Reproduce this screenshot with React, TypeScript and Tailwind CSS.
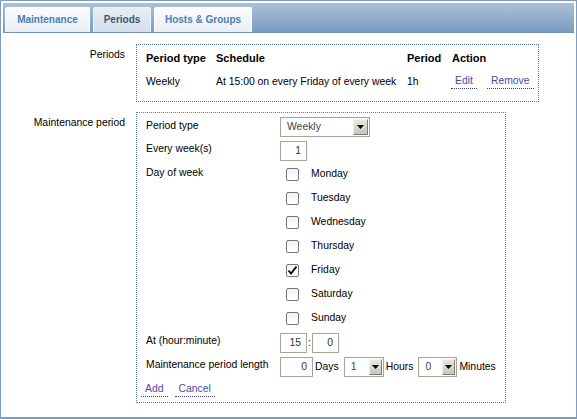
import type { ReactNode } from "react";

const days = ["Monday", "Tuesday", "Wednesday", "Thursday", "Friday", "Saturday", "Sunday"];

function Tab({ label, active, className }: { label: string; active?: boolean; className: string }) {
  return (
    <div
      className={`flex h-[25px] items-center justify-center rounded-t-[2px] border border-b-0 text-[10px] font-bold ${className} ${
        active
          ? "border-[#eef3f8] bg-gradient-to-b from-[#e6edf4] to-[#d3dfeb] text-[#3c5878]"
          : "border-[#ffffff] bg-gradient-to-b from-[#fbfcfd] to-[#e9eff5] text-[#4d7db5]"
      }`}
    >
      {label}
    </div>
  );
}

function DropBtn({ className }: { className: string }) {
  return (
    <div
      className={`my-[1px] mr-[1px] flex items-center justify-center border-t border-l border-t-[#f4f3ee] border-l-[#f4f3ee] border-r border-b border-r-[#7a7a7a] border-b-[#7a7a7a] bg-gradient-to-b from-[#e9e7e1] to-[#c9c5bc] ${className}`}
    >
      <svg width="7" height="4" viewBox="0 0 7 4">
        <path d="M0 0H7L3.5 4Z" fill="#000" />
      </svg>
    </div>
  );
}

function Select({ value, className, btn }: { value: string; className: string; btn: string }) {
  return (
    <div className={`flex h-[20px] items-stretch border border-[#a8a496] bg-white ${className}`}>
      <div className="flex flex-1 items-center pl-[6px] text-[#444]">{value}</div>
      <DropBtn className={btn} />
    </div>
  );
}

function Input({ value, className }: { value: string; className: string }) {
  return (
    <div className={`flex h-[20px] items-center justify-end border border-[#a8a496] bg-white pr-[5px] text-[#333] ${className}`}>
      {value}
    </div>
  );
}

function Link({ children, className = "" }: { children: ReactNode; className?: string }) {
  return (
    <span className={`border-b border-dotted border-[#3c3c96] px-[4px] pb-[1px] text-[#4a4aa2] ${className}`}>{children}</span>
  );
}

function Checkbox({ checked }: { checked?: boolean }) {
  return (
    <div className="flex h-[13px] w-[13px] items-center justify-center rounded-[2px] border border-[#777] bg-gradient-to-b from-[#f2f2f2] to-[#ffffff]">
      {checked && (
        <svg width="11" height="11" viewBox="0 0 11 11">
          <path d="M1.5 5.5L4 8.5L9.5 1.5" stroke="#000" strokeWidth="1.8" fill="none" />
        </svg>
      )}
    </div>
  );
}

export default function App() {
  return (
    <div className="h-[419px] w-[577px] border border-b-2 border-[#7e9cbe] bg-white font-['Liberation_Sans',Arial,sans-serif] text-[10.4px] leading-[12px] text-black">
      <div className="mx-[2px] mt-[2px] flex h-[30px] items-end gap-[3px] border-b border-[#7593b7] bg-gradient-to-b from-[#abc0d7] to-[#7a9bc0] pl-[2px]">
        <Tab label="Maintenance" className="w-[85px]" />
        <Tab label="Periods" active className="w-[58px]" />
        <Tab label="Hosts & Groups" className="w-[98px]" />
      </div>

      <div className="ml-[2px] mt-[11px] flex">
        <div className="w-[122px] pt-[5px] text-right">Periods</div>
        <div className="ml-[11px] w-[403px] border border-dotted border-[#5a79b8] pb-[10px] pl-[9px] pt-[4px]">
          <div className="flex h-[18px] items-center text-[11px] font-bold">
            <div className="w-[70px]">Period type</div>
            <div className="w-[191px]">Schedule</div>
            <div className="w-[45px]">Period</div>
            <div>Action</div>
          </div>
          <div className="mt-[6px] flex h-[18px] items-center">
            <div className="w-[70px]">Weekly</div>
            <div className="w-[191px]">At 15:00 on every Friday of every week</div>
            <div className="w-[45px]">1h</div>
            <div className="flex">
              <Link className="-ml-[1px]">Edit</Link>
              <Link className="ml-[10px]">Remove</Link>
            </div>
          </div>
        </div>
      </div>

      <div className="ml-[2px] mt-[10px] flex">
        <div className="w-[122px] pt-[5px] text-right">Maintenance period</div>
        <div className="ml-[11px] w-[370px] border border-dotted border-[#5a79b8] pb-[4px] pl-[9px] pt-[4px]">
          <div className="flex h-[20px]">
            <div className="w-[134px] pt-[3px]">Period type</div>
            <Select value="Weekly" className="w-[90px]" btn="w-[15px]" />
          </div>
          <div className="mt-[4px] flex h-[20px]">
            <div className="w-[134px] pt-[2px]">Every week(s)</div>
            <Input value="1" className="w-[27px]" />
          </div>
          <div className="mt-[1px] flex">
            <div className="w-[134px] pt-[5px]">Day of week</div>
            <div className="flex flex-col">
              {days.map((d) => (
                <div key={d} className="flex h-[24px] items-center pl-[6px]">
                  <Checkbox checked={d === "Friday"} />
                  <span className="ml-[12px]">{d}</span>
                </div>
              ))}
            </div>
          </div>
          <div className="mt-[3px] flex h-[20px]">
            <div className="w-[134px] pt-[2px]">At (hour:minute)</div>
            <Input value="15" className="w-[27px]" />
            <span className="flex w-[5px] items-center justify-center">:</span>
            <Input value="0" className="w-[27px]" />
          </div>
          <div className="mt-[4px] flex h-[20px]">
            <div className="w-[134px] pt-[2px]">Maintenance period length</div>
            <Input value="0" className="w-[33px]" />
            <span className="ml-[2px] flex items-center">Days</span>
            <Select value="1" className="ml-[5px] w-[40px]" btn="w-[13px]" />
            <span className="ml-[2px] flex items-center">Hours</span>
            <Select value="0" className="ml-[5px] w-[39px]" btn="w-[13px]" />
            <span className="ml-[2px] flex items-center">Minutes</span>
          </div>
          <div className="mt-[6px] flex pb-[1px]">
            <Link className="-ml-[5px]">Add</Link>
            <Link className="ml-[7px]">Cancel</Link>
          </div>
        </div>
      </div>
    </div>
  );
}
